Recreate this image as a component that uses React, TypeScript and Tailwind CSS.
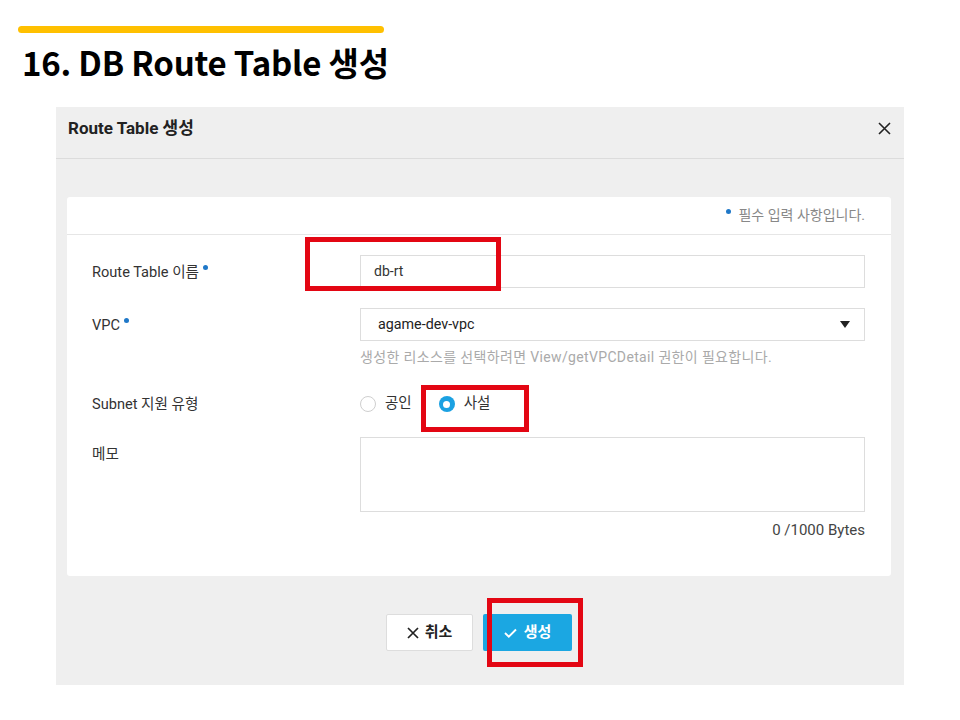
import React from "react";

const ui = { fontFamily: 'Roboto, "Noto Sans CJK KR", sans-serif' };
const title = { fontFamily: '"Noto Sans CJK KR", "Noto Sans", sans-serif' };

function Dot() {
  return <span className="inline-block w-[5px] h-[5px] rounded-full bg-[#1f78c8] ml-[4px] relative top-[-7px]" />;
}

function Label({ children, req }: { children: React.ReactNode; req?: boolean }) {
  return (
    <div className="text-[14.6px] text-[#333] leading-[20px]">
      {children}
      {req && <Dot />}
    </div>
  );
}

export default function App() {
  return (
    <div className="bg-white w-[960px] h-[720px] overflow-hidden pt-[26px]" style={ui}>
      <div className="ml-[18px] w-[366px] h-[7px] rounded-full bg-[#ffc000]" />
      <div
        className="ml-[22px] mt-[9px] h-[40px] leading-[40px] text-[33px] font-bold text-black tracking-[-0.2px]"
        style={title}
      >
        16. DB Route Table 생성
      </div>

      <div className="relative ml-[56px] mt-[25px] w-[848px] bg-[#efefef]">
        {/* header */}
        <div className="h-[52px] border-b border-[#dcdcdc] flex items-start justify-between pl-[12px] pr-[13px] pt-[11px]">
          <div className="text-[17px] leading-[20px] font-bold text-[#222]">Route Table 생성</div>
          <svg width="13" height="13" viewBox="0 0 13 13" className="mt-[4px]">
            <path d="M1 1L12 12M12 1L1 12" stroke="#222" strokeWidth="1.6" />
          </svg>
        </div>

        {/* body */}
        <div className="pt-[38px] pl-[11px] pr-[13px]">
          <div className="bg-white rounded-[3px]">
            <div className="h-[38px] border-b border-[#e6e6e6] flex items-center justify-end pr-[26px] text-[14px] text-[#888]">
              <span className="inline-block w-[5px] h-[5px] rounded-full bg-[#1f78c8] mr-[7px] relative top-[-4px]" />
              필수 입력 사항입니다.
            </div>

            <div className="pl-[25px] pr-[26px] pt-[20px] pb-[37px]">
              <div className="grid grid-cols-[268px_1fr] items-center">
                <Label req>Route Table 이름</Label>
                <div className="h-[33px] border border-[#dddddd] bg-white flex items-center pl-[13px] text-[14px] text-[#333]">
                  db-rt
                </div>
              </div>

              <div className="grid grid-cols-[268px_1fr] items-center mt-[20px]">
                <Label req>VPC</Label>
                <div className="h-[33px] border border-[#dddddd] bg-white flex items-center justify-between pl-[17px] pr-[14px] text-[14.3px] text-[#222]">
                  <span>agame-dev-vpc</span>
                  <svg width="10" height="7" viewBox="0 0 10 7">
                    <path d="M0 0H10L5 7Z" fill="#222" />
                  </svg>
                </div>
              </div>
              <div className="grid grid-cols-[268px_1fr] mt-[8px]">
                <div />
                <div className="text-[14px] leading-[16px] text-[#aaaaaa] tracking-[0.35px]">
                  생성한 리소스를 선택하려면 View/getVPCDetail 권한이 필요합니다.
                </div>
              </div>

              <div className="grid grid-cols-[268px_1fr] items-center mt-[29px]">
                <Label>Subnet 지원 유형</Label>
                <div className="flex items-center h-[20px] text-[14.5px] text-[#333]">
                  <span className="w-[16px] h-[16px] rounded-full border border-[#cfcfcf] bg-white" />
                  <span className="ml-[9px]">공인</span>
                  <span className="ml-[27px] w-[16px] h-[16px] rounded-full bg-[#1ba1e2] flex items-center justify-center">
                    <span className="w-[7px] h-[7px] rounded-full bg-white" />
                  </span>
                  <span className="ml-[9px]">사설</span>
                </div>
              </div>

              <div className="grid grid-cols-[268px_1fr] mt-[23px]">
                <div className="pt-[7px]">
                  <Label>메모</Label>
                </div>
                <div className="h-[75px] border border-[#dddddd] bg-white" />
              </div>
              <div className="mt-[9px] text-right text-[15px] leading-[18px] text-[#444]">0 /1000 Bytes</div>
            </div>
          </div>

          {/* footer */}
          <div className="flex justify-center gap-[10px] pt-[38px] pb-[34px]">
            <button className="w-[87px] h-[37px] bg-white border border-[#dddddd] rounded-[2px] flex items-center justify-center gap-[6px] text-[15px] font-bold text-[#222]">
              <svg width="12" height="12" viewBox="0 0 12 12">
                <path d="M1 1L11 11M11 1L1 11" stroke="#222" strokeWidth="1.7" />
              </svg>
              취소
            </button>
            <button className="w-[89px] h-[37px] bg-[#1ba7e2] rounded-[2px] flex items-center justify-center gap-[7px] text-[15px] font-bold text-white">
              <svg width="13" height="10" viewBox="0 0 13 10">
                <path d="M1 5L4.8 8.6L12 1.5" stroke="white" strokeWidth="1.9" fill="none" />
              </svg>
              생성
            </button>
          </div>
        </div>

        {/* red highlight boxes */}
        <div className="absolute left-[249px] top-[130px] w-[196px] h-[54px] border-[5px] border-[#e30613]" />
        <div className="absolute left-[365px] top-[278px] w-[108px] h-[47px] border-[5px] border-[#e30613]" />
        <div className="absolute left-[431px] top-[491px] w-[96px] h-[69px] border-[5px] border-[#e30613]" />
      </div>
    </div>
  );
}
